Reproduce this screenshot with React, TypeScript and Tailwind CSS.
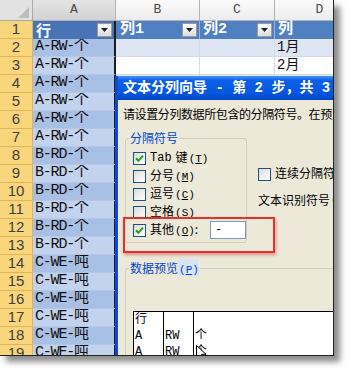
import React from "react";

const MONO = "font-['Liberation_Mono','Noto_Sans_CJK_SC',monospace]";
const CJK = "font-['Noto_Sans_CJK_SC','Liberation_Sans',sans-serif]";
const SANS = "font-['Liberation_Sans',sans-serif]";

const colA: string[] = [
  ...Array(6).fill("A-RW-个"),
  ...Array(6).fill("B-RD-个"),
  ...Array(6).fill("C-WE-吨"),
];

function Dropdown() {
  return (
    <span className="ml-auto mr-[2px] w-[15px] h-[14px] border border-[#9a9a9a] bg-[linear-gradient(180deg,#ffffff,#dcdcdc)] flex items-center justify-center">
      <svg width="7" height="4" viewBox="0 0 7 4">
        <path d="M0 0 L7 0 L3.5 4 Z" fill="#222" />
      </svg>
    </span>
  );
}

function Check({ checked }: { checked?: boolean }) {
  return (
    <span className="w-[13px] h-[13px] shrink-0 border border-[#1c5180] bg-[linear-gradient(135deg,#dcdcd5,#ffffff)] flex items-center justify-center">
      {checked && (
        <svg width="9" height="9" viewBox="0 0 9 9">
          <path d="M1 4.2 L3.4 6.8 L8 1.6" stroke="#21a121" strokeWidth="2" fill="none" />
        </svg>
      )}
    </span>
  );
}

function Mn({ k }: { k: string }) {
  return (
    <span className={`text-[11px] ml-[1px] ${MONO}`}>
      (<span className="underline">{k}</span>)
    </span>
  );
}

function Row({ children }: { children: React.ReactNode }) {
  return <div className={`flex items-center h-[18px] pl-[7px] gap-[4px] text-[12px] text-black ${CJK}`}>{children}</div>;
}

export default function App() {
  const rowNums = Array.from({ length: 19 }, (_, i) => i + 1);
  return (
    <div className="w-[355px] h-[377px] bg-white">
      <div className="relative w-[334px] h-[356px] overflow-hidden border-r border-b border-[#222] shadow-[6px_6px_6px_rgba(0,0,0,0.45)] bg-white">
        {/* spreadsheet */}
        <div className="grid grid-cols-[33px_83px_84px_75px_90px] grid-rows-[21px_repeat(19,18px)] w-[365px]">
          <div className="relative bg-[#e2e2e2] border-r border-b border-[#a9a9a9]">
            <svg className="absolute left-[18px] top-[7px]" width="11" height="11" viewBox="0 0 11 11">
              <path d="M11 0 L11 11 L0 11 Z" fill="#bdbdbd" />
            </svg>
          </div>
          {["A", "B", "C", "D"].map((c, i) => (
            <div
              key={c}
              className={`flex items-center justify-center text-[13px] text-[#4a4a4a] border-r border-b border-[#b3b3b3] ${MONO} ${
                i === 0 ? "bg-[linear-gradient(180deg,#e4e4e4,#d2d2d2)]" : "bg-[linear-gradient(180deg,#fbfbfb,#ececec)]"
              }`}
            >
              {c}
            </div>
          ))}
          {rowNums.map((n) => (
            <React.Fragment key={n}>
              <div className={`flex items-center justify-center bg-[#f9d67b] border-b border-r border-[#ddb55a] text-[15px] text-[#3f3f3f] ${SANS}`}>
                {n}
              </div>
              {n === 1 ? (
                <>
                  <div className={`flex items-center pl-[3px] bg-[#4874b6] border-r-2 border-[#1e1e1e] text-white font-bold text-[15px] ${CJK}`}>
                    行
                    <Dropdown />
                  </div>
                  <div className={`flex items-center pl-[4px] bg-[#4f80c1] border-r border-[#9db3d6] text-white font-bold text-[15px] ${MONO}`}>
                    列1
                    <Dropdown />
                  </div>
                  <div className={`flex items-center pl-[3px] bg-[#4f80c1] border-r border-[#9db3d6] text-white font-bold text-[15px] ${MONO}`}>
                    列2
                    <Dropdown />
                  </div>
                  <div className={`flex items-center pl-[3px] bg-[#4f80c1] text-white font-bold text-[15px] ${MONO}`}>列</div>
                </>
              ) : (
                <>
                  <div
                    className={`flex items-center pl-[2px] border-r-2 border-r-[#1e1e1e] border-b border-b-[#b4c7e7] text-[15px] text-[#111] tracking-[-1.2px] whitespace-nowrap overflow-hidden ${MONO} ${
                      n % 2 === 0 ? "bg-[#a9c0e5]" : "bg-[#c2d3ee]"
                    }`}
                  >
                    {colA[n - 2]}
                  </div>
                  {[0, 1, 2].map((j) => (
                    <div
                      key={j}
                      className={`flex items-center pl-[2px] border-r border-b border-[#d3dceb] text-[14px] text-[#111] ${MONO} ${
                        n % 2 === 0 ? "bg-[#dde6f2]" : "bg-white"
                      }`}
                    >
                      {j === 2 && n === 2 ? "1月" : j === 2 && n === 3 ? "2月" : ""}
                    </div>
                  ))}
                </>
              )}
            </React.Fragment>
          ))}
        </div>

        {/* dialog window */}
        <div className="absolute left-[115px] top-[76px] w-[260px] h-[320px] border-l-[3px] border-[#0b4bd2] bg-[#ece9d8] flex flex-col">
          <div
            className={`h-[24px] shrink-0 flex items-center pl-[5px] text-white font-bold text-[14px] whitespace-pre bg-[linear-gradient(180deg,#4a95f7_0%,#0b5fe9_18%,#0757e2_70%,#0046c4_100%)] ${MONO}`}
          >
            文本分列向导 - 第 2 步，共 3 步
          </div>
          <div className={`mt-[6px] pl-[5px] h-[16px] flex items-center text-[12px] tracking-[-0.4px] text-black whitespace-nowrap ${CJK}`}>
            请设置分列数据所包含的分隔符号。在预览选定数据中可看到分列的效果。
          </div>
          <div className="flex mt-[16px]">
            <div className="relative ml-[7px] w-[128px] h-[105px] border border-[#cfcebf] rounded-[3px] pt-[10px]">
              <span className={`absolute left-[3px] top-[-8px] px-[1px] bg-[#ece9d8] text-[12px] text-[#0046d5] leading-[14px] ${CJK}`}>
                分隔符号
              </span>
              <Row>
                <Check checked />
                <span className={`text-[12px] ${MONO}`}>Tab</span>
                <span>
                  键<Mn k="T" />
                </span>
              </Row>
              <Row>
                <Check />
                <span>
                  分号<Mn k="M" />
                </span>
              </Row>
              <Row>
                <Check />
                <span>
                  逗号<Mn k="C" />
                </span>
              </Row>
              <Row>
                <Check />
                <span>
                  空格<Mn k="S" />
                </span>
              </Row>
              <Row>
                <Check checked />
                <span className="w-[56px]">
                  其他<Mn k="O" />:
                </span>
                <span className={`w-[36px] h-[18px] bg-white border border-[#7f9db9] flex items-center pl-[4px] text-[12px] ${MONO}`}>-</span>
              </Row>
            </div>
            <div className={`ml-[11px] flex flex-col text-[12px] text-black whitespace-nowrap ${CJK}`}>
              <div className="mt-[29px] h-[14px] flex items-center gap-[4px]">
                <Check />
                <span>
                  连续分隔符号视为单个处理<Mn k="R" />
                </span>
              </div>
              <div className="mt-[12px] h-[14px] flex items-center">
                文本识别符号<Mn k="Q" />:
              </div>
            </div>
          </div>
          <div className="relative ml-[7px] mt-[25px] flex-1 border-t border-l border-[#cfcebf] rounded-tl-[3px] pl-[7px] pt-[42px]">
            <span className={`absolute left-[3px] top-[-8px] px-[1px] bg-[#ece9d8] text-[12px] text-[#0046d5] leading-[14px] ${CJK}`}>
              数据预览
              <span className="bg-[#d7e4f6]">
                <Mn k="P" />
              </span>
            </span>
            <div className={`flex bg-white border-t border-l border-black h-[60px] text-[12px] text-black leading-[16px] ${MONO}`}>
              <div className="w-[29px] pl-[1px]">
                <div>行</div>
                <div>A</div>
                <div>A</div>
              </div>
              <div className="w-[30px] border-l border-black pl-[1px]">
                <div>&nbsp;</div>
                <div>RW</div>
                <div>RW</div>
              </div>
              <div className="flex-1 border-l border-black pl-[1px]">
                <div>&nbsp;</div>
                <div>个</div>
                <div>个</div>
              </div>
            </div>
          </div>
        </div>

        {/* red annotation */}
        <div className="absolute left-[123px] top-[217px] w-[152px] h-[36px] border-2 border-[#e4312b] shadow-[1px_2px_3px_rgba(200,40,40,0.45)]" />

        {/* mouse cursor */}
        <svg className="absolute left-[196px] top-[345px]" width="11" height="16" viewBox="0 0 11 16">
          <path d="M0.5 0.5 L0.5 13 L3.5 10 L6 15 L8 14 L5.5 9.3 L10 9.3 Z" fill="#fff" stroke="#000" strokeWidth="1" />
        </svg>
      </div>
    </div>
  );
}
